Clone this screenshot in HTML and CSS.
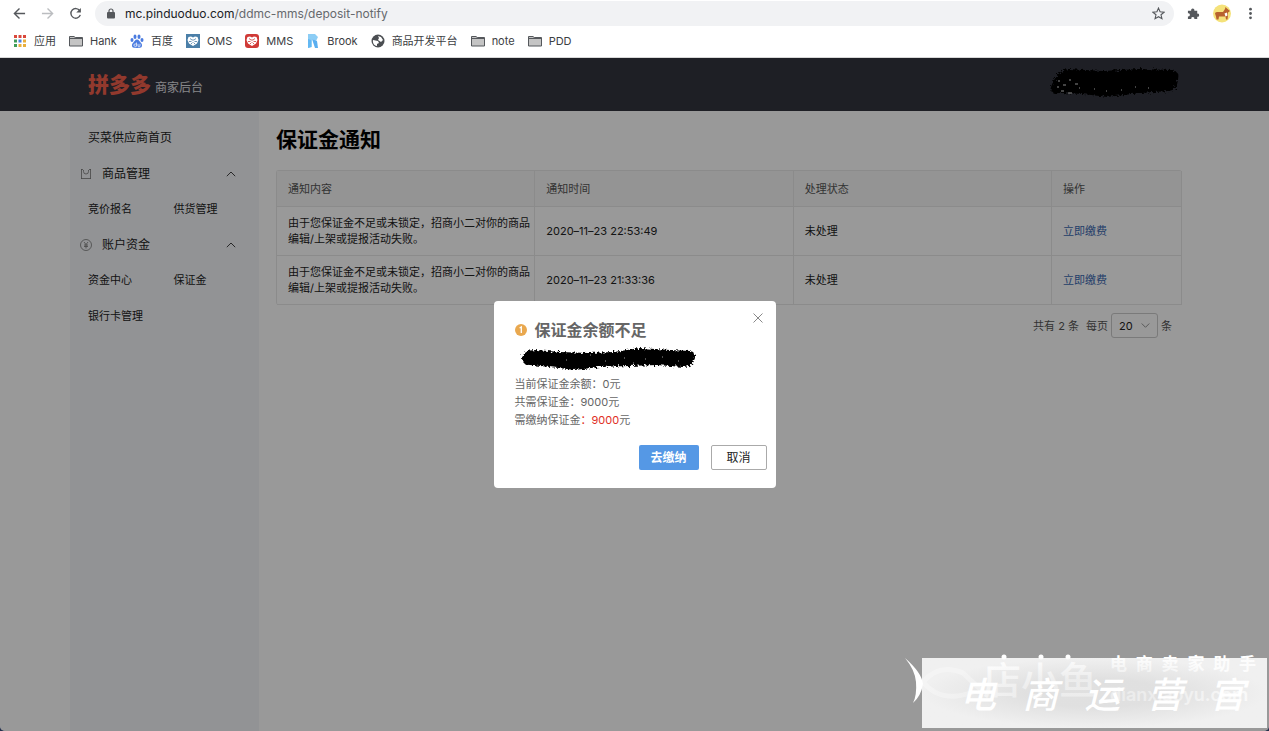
FILE: index.html
```html
<!DOCTYPE html>
<html lang="zh-CN">
<head>
<meta charset="utf-8">
<title>保证金通知</title>
<link rel="stylesheet" href="styles.css">
</head>
<body>
<svg class="defs" aria-hidden="true">
  <defs>
    <filter id="rough" x="-5%" y="-20%" width="110%" height="140%">
      <feTurbulence type="fractalNoise" baseFrequency="0.45" numOctaves="2" seed="4" result="n"/>
      <feDisplacementMap in="SourceGraphic" in2="n" scale="6"/>
    </filter>
    <symbol id="folder" viewBox="0 0 14 14">
      <path d="M.5 12V2.500H5l1.200 1h7.300V12z" fill="#c4c4c4" stroke="#55585c"/>
      <path d="M1 4.500h12" stroke="#55585c"/>
    </symbol>
    <symbol id="heart" viewBox="0 0 14 14">
      <path d="M7 12 3 9.500 1.500 6l1-3L5 2.500l2 1 2-1 2.500.5 1 3L11 9.500z" fill="#fff"/>
      <path d="M4 4.500 6 6M10 4.500 8 6M3 7.500h2.500M8.500 7.500H11M5 10l1.500-1.500M9 10 7.500 8.500M7 5v2" stroke="currentColor" stroke-width=".8" fill="none"/>
    </symbol>
    <symbol id="up" viewBox="0 0 10 10"><path d="M.8 7.200 5 3l4.200 4.200" fill="none" stroke="currentColor"/></symbol>
  </defs>
</svg>

<header class="browser">
  <div class="toolbar">
    <div class="nav">
      <button class="icon-btn" aria-label="后退"><svg viewBox="0 0 14 14"><path d="M13 7H2M7 1.500 1.500 7 7 12.500" fill="none" stroke="#55585c" stroke-width="1.500"/></svg></button>
      <button class="icon-btn" aria-label="前进"><svg viewBox="0 0 14 14"><path d="M1 7h11M7 1.500 12.500 7 7 12.500" fill="none" stroke="#bbbdc0" stroke-width="1.500"/></svg></button>
      <button class="icon-btn" aria-label="刷新"><svg viewBox="0 0 14 14"><path d="M11.600 4A5.200 5.200 0 1 0 12.200 8.500" fill="none" stroke="#55585c" stroke-width="1.500"/><path d="M12.800 1v5H7.800z" fill="#55585c"/></svg></button>
    </div>
    <div class="omnibox">
      <svg class="lock" viewBox="0 0 8 11"><path d="M2 5V3a2 2 0 0 1 4 0v2" fill="none" stroke="#55585c" stroke-width="1.200"/><rect y="4" width="8" height="6.500" rx="1" fill="#55585c"/></svg>
      <span class="url">mc.pinduoduo.com<span class="path">/ddmc-mms/deposit-notify</span></span>
      <button class="icon-btn" aria-label="收藏"><svg viewBox="0 0 14 14"><path d="m7 1.200 1.700 4 4.300.4-3.300 2.800 1 4.200L7 10.400l-3.700 2.200 1-4.200L1 5.600l4.300-.4z" fill="none" stroke="#55585c" stroke-width="1.200"/></svg></button>
    </div>
    <div class="actions">
      <button class="icon-btn" aria-label="扩展程序"><svg viewBox="0 0 14 14"><path d="M1 4h3.500a1.800 1.800 0 1 1 3.400 0H11v3.200a1.700 1.700 0 1 1 0 3.300V13H7.900a1.700 1.700 0 1 0-3.300 0H1V10a1.700 1.700 0 1 0 0-3.300z" fill="#55585c"/></svg></button>
      <button class="icon-btn avatar" aria-label="用户"><svg viewBox="0 0 20 20"><circle cx="10" cy="9.500" r="9" fill="#f5e27a"/><path d="M3 9.500Q3 8 5 8h6l2-3 .5-2 1.500 1.500 3 2.500-2 1.500v3l-.5 4H14l-.5-3H7l-.5 3H4.500L4 12.500z" fill="#b8622e"/><path d="M12.500 9.500 15 8.500l.5 3-2 1z" fill="#fff"/></svg></button>
      <button class="icon-btn" aria-label="菜单"><svg viewBox="0 0 14 14" fill="#55585c"><circle cx="7" cy="2.300" r="1.500"/><circle cx="7" cy="7" r="1.500"/><circle cx="7" cy="11.700" r="1.500"/></svg></button>
    </div>
  </div>
  <nav class="bookmarks">
    <a href="#"><svg viewBox="0 0 14 14"><path d="M1 1h3v3H1z" fill="#d9483b"/><path d="M5.500 1h3v3h-3z" fill="#d9483b"/><path d="M10 1h3v3h-3z" fill="#d9483b"/><path d="M1 5.500h3v3H1z" fill="#3f9d58"/><path d="M5.500 5.500h3v3h-3z" fill="#4a7fe0"/><path d="M10 5.500h3v3h-3z" fill="#e8ae3c"/><path d="M1 10h3v3H1z" fill="#3f9d58"/><path d="M5.500 10h3v3h-3z" fill="#e8ae3c"/><path d="M10 10h3v3h-3z" fill="#e8ae3c"/></svg>应用</a>
    <a href="#"><svg><use href="#folder"/></svg>Hank</a>
    <a href="#"><svg viewBox="0 0 14 14" fill="#4a7be0"><ellipse cx="5" cy="2.700" rx="1.500" ry="2.200"/><ellipse cx="9" cy="2.700" rx="1.500" ry="2.200"/><ellipse cx="2" cy="6" rx="1.500" ry="2"/><ellipse cx="12" cy="6" rx="1.500" ry="2"/><path d="M7 5.500c2 0 2.500 2 4 3.500s1.500 4.500-1 4.800c-1.500.2-4.500.2-6 0C1.500 13.500 1.500 10.500 3 9s2-3.500 4-3.500z"/><path d="M6.500 8.500v3.800H5a1 1 0 0 1 0-2.300h1.500M8 9.800v2.500h2V9.800" stroke="#fff" fill="none" stroke-width=".7"/></svg>百度</a>
    <a href="#"><svg class="tile-blue"><use href="#heart"/></svg>OMS</a>
    <a href="#"><svg class="tile-red"><use href="#heart"/></svg>MMS</a>
    <a href="#"><svg viewBox="0 0 14 14"><path d="M2 0h7l3 3-2 4-4-2v8l-4 1z" fill="#8ccdf5"/><path d="m6 5 5 2 1 7H9z" fill="#59aef0"/><path d="M2 5l3 1v7l-3 1z" fill="#63b8f3"/></svg>Brook</a>
    <a href="#"><svg viewBox="0 0 14 14"><circle cx="7" cy="7" r="6.500" fill="#4b4e52"/><path d="M2 6c2 0 3 1 5 1l1 2-2 1v2C3 11.500 1.500 9 2 6zM7 2l3 1 2 3-2 2-3-2 1-2z" fill="#fff"/></svg>商品开发平台</a>
    <a href="#"><svg><use href="#folder"/></svg>note</a>
    <a href="#"><svg><use href="#folder"/></svg>PDD</a>
  </nav>
</header>

<div class="page">
  <header class="site-header">
    <div class="container">
      <div class="brand"><strong>拼多多</strong><span>商家后台</span></div>
    </div>
  </header>
  <div class="container columns">
    <aside class="sidebar">
      <a class="home" href="#">买菜供应商首页</a>
      <button class="group"><svg viewBox="0 0 12 12"><path d="M1.500 1v10M10.500 1v10M1 1.500h2M9 1.500h2M1 10.500h10M3.500 2v1.500a2.500 2.500 0 0 0 5 0V2" fill="none" stroke="currentColor" stroke-width=".8"/></svg><span>商品管理</span><svg class="arrow"><use href="#up"/></svg></button>
      <div class="links"><a href="#">竞价报名</a><a href="#">供货管理</a></div>
      <button class="group"><svg viewBox="0 0 12 12"><path d="M4 3l2 2.500L8 3M6 5.500V9.500M4 6h4M4 7.500h4" fill="none" stroke="currentColor" stroke-width=".8"/><circle cx="6" cy="6" r="5.500" fill="none" stroke="currentColor" stroke-width=".8"/></svg><span>账户资金</span><svg class="arrow"><use href="#up"/></svg></button>
      <div class="links"><a href="#">资金中心</a><a href="#">保证金</a><a href="#">银行卡管理</a></div>
    </aside>
    <main class="content">
      <h1>保证金通知</h1>
      <table class="notices">
        <thead><tr><th>通知内容</th><th>通知时间</th><th>处理状态</th><th class="op">操作</th></tr></thead>
        <tbody>
          <tr><td class="message">由于您保证金不足或未锁定，招商小二对你的商品编辑/上架或提报活动失败。</td><td>2020–11–23 22:53:49</td><td>未处理</td><td><a href="#">立即缴费</a></td></tr>
          <tr><td class="message">由于您保证金不足或未锁定，招商小二对你的商品编辑/上架或提报活动失败。</td><td>2020–11–23 21:33:36</td><td>未处理</td><td><a href="#">立即缴费</a></td></tr>
        </tbody>
      </table>
      <div class="pager">
        <span class="total">共有 2 条</span>
        <label for="size">每页</label>
        <span class="select"><select id="size"><option>20</option></select><svg class="arrow"><use href="#up"/></svg></span>
        <span>条</span>
      </div>
    </main>
  </div>

  <div class="overlay">
    <section class="dialog" role="dialog" aria-labelledby="dialog-title">
      <button class="close" aria-label="关闭"><svg viewBox="0 0 10 10"><path d="m.5.5 9 9m0-9-9 9" stroke="#888" fill="none"/></svg></button>
      <h2><svg viewBox="0 0 12 12"><circle cx="6" cy="6" r="6" fill="#e9a84f"/><path d="M4.600 4 6.300 3v6" stroke="#fff" stroke-width="1.300" fill="none"/></svg><span id="dialog-title">保证金余额不足</span></h2>
      <svg class="scribble" viewBox="0 0 176 24"><path filter="url(#rough)" d="M2 13Q3 4 16 4L40 6l28 1 26-1L120 2l30 2 20 1q6 1 5 7-2 9-12 9l-26-2-28 1-30 1-24 3-25-3-20-2Q3 19 2 13z"/><path d="M70 9h1M85 15h1M104 12h1M125 13h1M142 11h1M158 15h1M46 14h1M113 17h1" stroke="#999"/></svg>
      <p>当前保证金余额：0元</p>
      <p>共需保证金：9000元</p>
      <p>需缴纳保证金<em>：9000</em>元</p>
      <div class="buttons"><button class="primary">去缴纳</button><button class="secondary">取消</button></div>
    </section>
  </div>
  <svg class="scribble account" viewBox="0 0 130 34"><path filter="url(#rough)" d="M2 20Q8 3 20 2l34 2 36-2 34 1q7 2 5 10-1 10-9 11l-28 2-34 4-24-3-24-1Q-1 27 2 20z"/><path d="M9 14h2M14 18h3M20 13h2M26 17h3M12 24h3M19 26h4M8 20h2M30 21h1M45 22h1M57 24h1M72 23h1M86 20h1M99 21h1" stroke="#888"/></svg>

  <div class="watermark">
    <svg class="fish" viewBox="0 0 90 60"><path d="M0 0Q17 15 18 26q-2 12-10 19 4-8 3-21Q10 12 0 0z" fill="#fff"/><path d="M18 24Q34 5 58 15L78 34M18 24q18 22 50 10" fill="none" stroke="#fff" stroke-width="5" opacity=".3"/></svg>
    <div class="shop">店小鱼</div>
    <svg class="dots" viewBox="0 0 72 6" fill="#fff"><circle cx="3" cy="3" r="2.500"/><circle cx="40" cy="3" r="2.500"/><circle cx="67" cy="3" r="2.500"/></svg>
    <div class="side"><div class="slogan"><span>电</span><span>商</span><span>卖</span><span>家</span><span>助</span><span>手</span></div><div class="domain">dianxiaoyu.com</div></div>
    <div class="plate"><span>电</span><span>商</span><span>运</span><span>营</span><span>官</span></div>
  </div>
</div>
</body>
</html>
```

FILE: styles.css
```css
* { box-sizing: border-box; }
body {
  margin: 0;
  min-height: 100vh;
  display: flex;
  flex-direction: column;
  background: #26304c;
  color: #222;
  font: 11px/16px Inter, "Noto Sans CJK SC", sans-serif;
}
a { color: inherit; text-decoration: none; }
button { border: 0; padding: 0; background: none; font: inherit; color: inherit; }
svg { display: block; flex: none; }
.defs { position: absolute; width: 0; height: 0; }

.browser { background: #fff; border-bottom: 1px solid #d8d8d8; }
.toolbar { display: flex; align-items: center; padding: 1px 12px 0 13px; }
.nav { display: flex; gap: 15px; width: 82px; }
.icon-btn svg { width: 13px; height: 13px; }
.icon-btn.avatar svg { width: 20px; height: 20px; }
.omnibox {
  flex: 1;
  display: flex;
  align-items: center;
  height: 25px;
  padding: 0 9px 0 12px;
  border-radius: 13px;
  background: #f1f2f4;
}
.lock { width: 8px; height: 11px; margin-right: 10px; }
.url { flex: 1; font: 12px/20px Inter, sans-serif; color: #202124; }
.path { color: #66696d; }
.actions { display: flex; align-items: center; gap: 12px; padding-left: 13px; }
.bookmarks { display: flex; gap: 13px; height: 31px; padding: 0 13px 1px; align-items: center; color: #3c4043; }
.bookmarks a { display: flex; align-items: center; gap: 7px; }
.bookmarks svg { width: 14px; height: 14px; }
.tile-blue { background: #4b7fa8; color: #4b7fa8; }
.tile-red { background: #d03a37; color: #d03a37; border-radius: 3px; }

.page {
  position: relative;
  flex: 1;
  display: flex;
  flex-direction: column;
  overflow: hidden;
  background: #fff;
  border-radius: 0 0 5px 5px;
}
.container { width: 100%; max-width: 1129px; margin: 0 auto; }
.site-header { background: #32343f; }
.brand { display: flex; align-items: baseline; gap: 4px; height: 53px; padding: 12px 18px; }
.brand strong { font-size: 21px; line-height: 30px; font-weight: 900; color: #f4604c; }
.brand span { font-size: 12px; color: #e0e0e4; }
.columns { flex: 1; display: flex; }
.sidebar { width: 189px; padding: 9px 0; background: #f4f6f9; }
.sidebar a { line-height: 36px; }
.sidebar .home { display: block; padding-left: 18px; font-size: 12px; }
.group { display: flex; align-items: center; width: 100%; height: 35px; padding: 0 23px 0 10px; gap: 10px; font-size: 12px; }
.group svg { width: 12px; height: 12px; color: #777; }
.group span { flex: 1; text-align: left; }
.group .arrow { width: 10px; height: 10px; color: #444; }
.links { display: grid; grid-template-columns: 1fr 1fr; padding-left: 18px; }

.content { flex: 1; padding: 14px 17px; }
h1 { margin: 0 0 15px; font-size: 21px; line-height: 30px; font-weight: 700; color: #000; }
.notices {
  width: 100%;
  table-layout: fixed;
  border-collapse: separate;
  border-spacing: 0;
  border: solid #e8e8e8;
  border-width: 1px 0 0 1px;
  border-radius: 3px;
}
.notices th, .notices td { height: 36px; padding: 8px 11px; border: solid #e8e8e8; border-width: 0 1px 1px 0; text-align: left; }
.notices th { background: #f7f7f7; font-weight: 400; color: #555; }
.notices .op { width: 130px; }
.notices .message { padding-right: 4px; }
.notices a { color: #3a68b0; }
.pager { display: flex; align-items: center; justify-content: flex-end; gap: 3px; padding: 8px 10px; color: #555; }
.total { margin-right: 4px; }
.select { position: relative; }
.select select {
  appearance: none;
  display: block;
  width: 47px;
  height: 25px;
  padding: 0 7px;
  border: 1px solid #ccc;
  border-radius: 3px;
  background: #fff;
  color: #222;
  font: inherit;
}
.select .arrow { position: absolute; right: 8px; top: 8px; width: 9px; height: 9px; transform: rotate(180deg); color: #888; pointer-events: none; }

.overlay { position: absolute; inset: 0; display: flex; align-items: center; justify-content: center; background: rgba(0, 0, 0, .4); }
.dialog { position: relative; width: 282px; padding: 18px 9px 18px 21px; border-radius: 4px; background: #fff; color: #666; }
.close { position: absolute; top: 12px; right: 13px; }
.close svg { width: 10px; height: 10px; }
.dialog h2 { display: flex; align-items: center; gap: 8px; margin: 0; font-size: 16px; line-height: 22px; font-weight: 700; }
.dialog h2 svg { width: 12px; height: 12px; }
.scribble { width: 176px; height: 24px; margin: 5px; }
.scribble.account { position: absolute; top: 9px; right: 90px; width: 130px; height: 34px; margin: 0; }
.dialog p { margin: 0; line-height: 18px; }
.dialog em { font-style: normal; color: #e02e24; }
.buttons { display: flex; justify-content: flex-end; gap: 12px; margin-top: 16px; font-size: 12px; }
.buttons button { height: 25px; border-radius: 2px; }
.primary { width: 60px; background: #5598e5; color: #fff; font-weight: 700; }
.secondary { width: 56px; border: 1px solid #aaa; color: #222; }

.watermark { position: absolute; right: 2px; bottom: 3px; width: 362px; height: 80px; color: #fff; }
.fish { position: absolute; left: 0; top: 10px; width: 90px; height: 60px; z-index: 1; }
.shop { position: absolute; left: 78px; top: 6px; font-size: 38px; line-height: 52px; font-weight: 500; }
.dots { position: absolute; left: 96px; top: 6px; width: 72px; height: 6px; }
.side { position: absolute; right: 11px; top: 6px; width: 146px; }
.slogan { display: flex; justify-content: space-between; font-size: 17px; line-height: 20px; font-weight: 700; }
.domain { margin-top: 10px; font-size: 18px; line-height: 22px; font-weight: 600; }
.plate {
  position: absolute;
  right: 0;
  bottom: 0;
  width: 345px;
  height: 70px;
  display: flex;
  align-items: center;
  justify-content: space-between;
  padding: 4px 22px 0 38px;
  background: radial-gradient(ellipse farthest-side, rgba(234, 234, 234, .88) 40%, rgba(252, 252, 252, .88));
  font-size: 36px;
  line-height: 50px;
  font-weight: 500;
  font-style: italic;
}
```
